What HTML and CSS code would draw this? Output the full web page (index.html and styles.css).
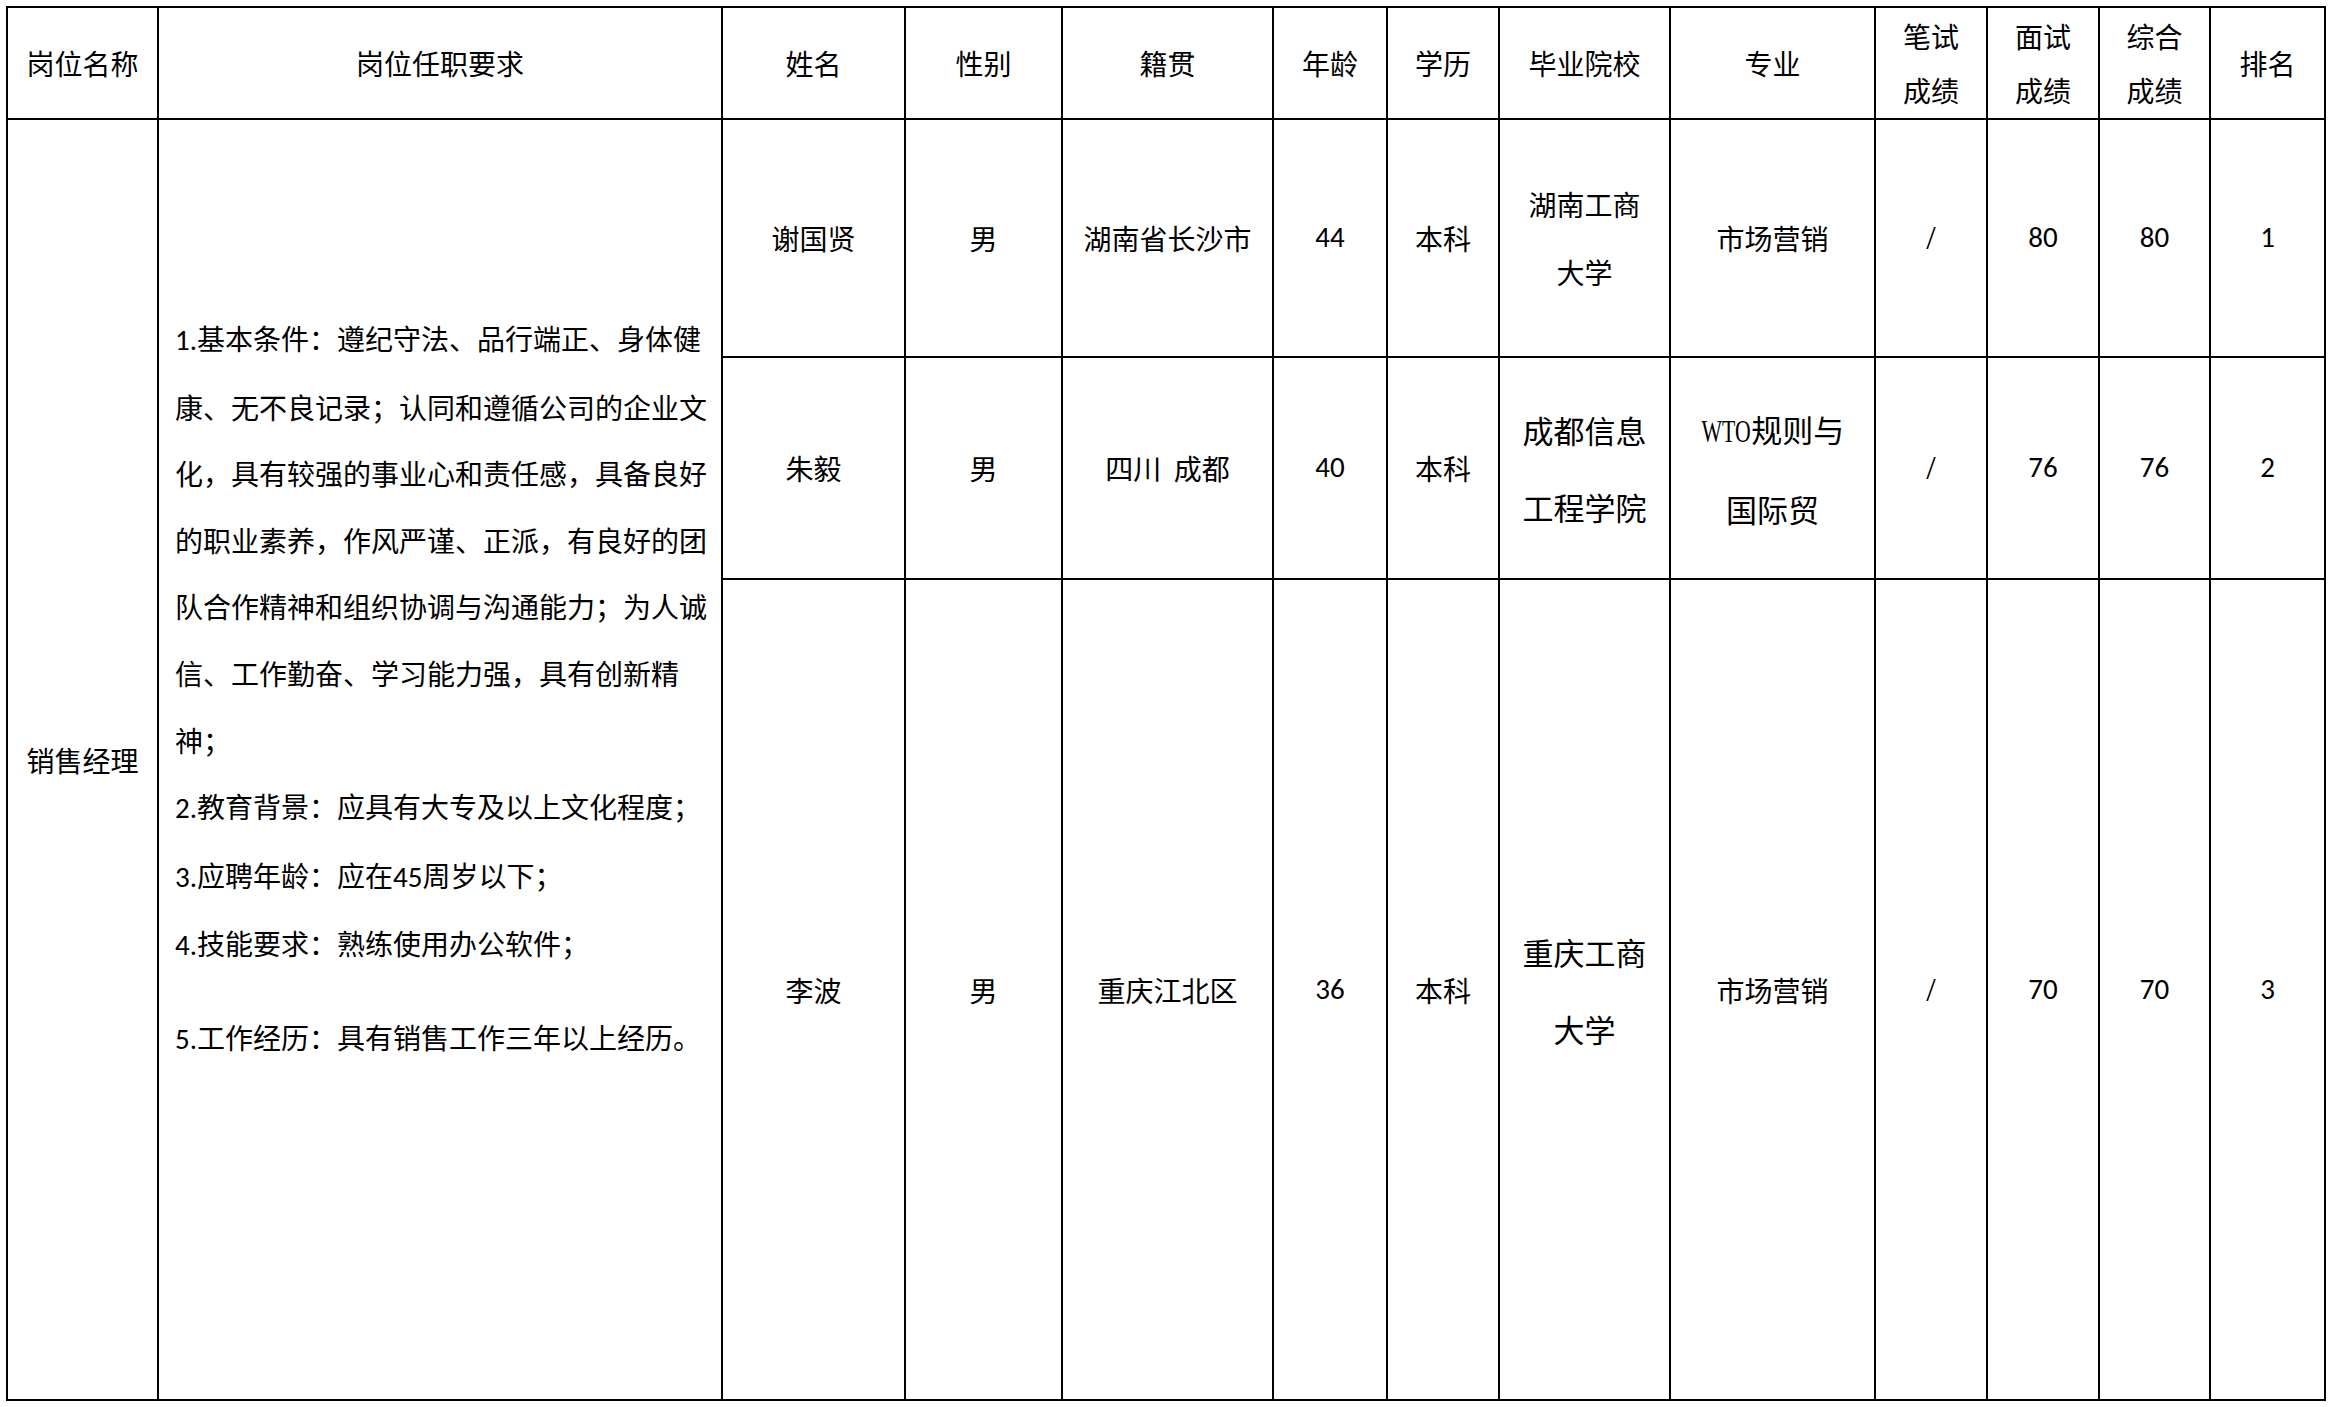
FILE: index.html
```html
<!DOCTYPE html>
<html lang="zh-CN">
<head>
<meta charset="utf-8">
<title>岗位招聘成绩表</title>
<link rel="stylesheet" href="styles.css">
</head>
<body>
<table class="sheet">
  <colgroup>
    <col class="w-post"><col class="w-req"><col class="w-name"><col class="w-sex"><col class="w-origin"><col class="w-age"><col class="w-edu"><col class="w-school"><col class="w-major"><col class="w-score"><col class="w-score2"><col class="w-score3"><col class="w-rank">
  </colgroup>
  <thead>
    <tr class="row-head">
      <th>岗位名称</th>
      <th>岗位任职要求</th>
      <th>姓名</th>
      <th>性别</th>
      <th>籍贯</th>
      <th>年龄</th>
      <th>学历</th>
      <th>毕业院校</th>
      <th>专业</th>
      <th class="two">笔试<br>成绩</th>
      <th class="two">面试<br>成绩</th>
      <th class="two">综合<br>成绩</th>
      <th>排名</th>
    </tr>
  </thead>
  <tbody>
    <tr class="row-1">
      <td rowspan="3" class="post">销售经理</td>
      <td rowspan="3" class="req">
        <p><span class="lat">1.</span>基本条件：遵纪守法、品行端正、身体健</p>
        <p>康、无不良记录；认同和遵循公司的企业文</p>
        <p>化，具有较强的事业心和责任感，具备良好</p>
        <p>的职业素养，作风严谨、正派，有良好的团</p>
        <p>队合作精神和组织协调与沟通能力；为人诚</p>
        <p>信、工作勤奋、学习能力强，具有创新精</p>
        <p>神；</p>
        <p><span class="lat">2.</span>教育背景：应具有大专及以上文化程度；</p>
        <p><span class="lat">3.</span>应聘年龄：应在<span class="lat">45</span>周岁以下；</p>
        <p><span class="lat">4.</span>技能要求：熟练使用办公软件；</p>
        <p class="gap"><span class="lat">5.</span>工作经历：具有销售工作三年以上经历。</p>
      </td>
      <td>谢国贤</td>
      <td>男</td>
      <td>湖南省长沙市</td>
      <td class="num">44</td>
      <td>本科</td>
      <td class="school small">湖南工商<br>大学</td>
      <td>市场营销</td>
      <td class="slash">/</td>
      <td class="num">80</td>
      <td class="num">80</td>
      <td class="num">1</td>
    </tr>
    <tr class="row-2">
      <td>朱毅</td>
      <td>男</td>
      <td class="keep">四川&nbsp;&nbsp;成都</td>
      <td class="num">40</td>
      <td>本科</td>
      <td class="school">成都信息<br>工程学院</td>
      <td class="school"><span class="wto">WTO</span>规则与<br>国际贸</td>
      <td class="slash">/</td>
      <td class="num">76</td>
      <td class="num">76</td>
      <td class="num">2</td>
    </tr>
    <tr class="row-3">
      <td>李波</td>
      <td>男</td>
      <td>重庆江北区</td>
      <td class="num">36</td>
      <td>本科</td>
      <td class="school">重庆工商<br>大学</td>
      <td>市场营销</td>
      <td class="slash">/</td>
      <td class="num">70</td>
      <td class="num">70</td>
      <td class="num">3</td>
    </tr>
  </tbody>
</table>
</body>
</html>
```

FILE: styles.css
```css
html, body {
  margin: 0;
  padding: 0;
  background: #ffffff;
}

body {
  color: #000000;
  font-family: "Noto Sans CJK SC", "Noto Sans", sans-serif;
  font-size: 28px;
}

.sheet {
  margin: 6px 0 0 6px;
  width: 2320px;
  height: 1394px;
  border-collapse: collapse;
  table-layout: fixed;
  border: 2px solid #000;
}

.w-post   { width: 151px; }
.w-req    { width: 564px; }
.w-name   { width: 183px; }
.w-sex    { width: 157px; }
.w-origin { width: 211px; }
.w-age    { width: 114px; }
.w-edu    { width: 112px; }
.w-school { width: 171px; }
.w-major  { width: 205px; }
.w-score  { width: 112px; }
.w-score2 { width: 112px; }
.w-score3 { width: 111px; }
.w-rank   { width: 115px; }

.sheet th,
.sheet td {
  border: 2px solid #000;
  padding: 0;
  text-align: center;
  vertical-align: middle;
  font-weight: 400;
  font-size: 28px;
  line-height: 40px;
  white-space: nowrap;
  overflow: hidden;
}

.row-head { height: 112px; }
.row-1 { height: 238px; }
.row-2 { height: 222px; }
.row-3 { height: 821px; }

.sheet th.two {
  line-height: 54px;
  padding-bottom: 1px;
}

.sheet td.req {
  text-align: left;
  vertical-align: top;
  padding: 185px 0 0 16px;
  line-height: 66.6px;
}

.req p {
  margin: 0;
  white-space: nowrap;
}

.req p.gap {
  margin-top: 25px;
}

.lat {
  font-family: "Carlito", "Lato", "Liberation Sans", sans-serif;
  font-size: 29px;
}

.sheet td.num {
  font-family: "Carlito", "Lato", "Liberation Sans", sans-serif;
  font-size: 29px;
  padding-bottom: 2px;
}

.sheet td.slash {
  font-family: "Liberation Serif", serif;
  font-size: 34px;
}

.sheet td.school {
  font-size: 31px;
  line-height: 77px;
}

.sheet td.school.small {
  font-size: 28px;
  line-height: 68px;
}

.wto {
  display: inline-block;
  font-family: "Liberation Serif", serif;
  font-size: 32px;
  transform: scaleX(0.68);
  margin: 0 -11px;
}

.keep {
  white-space: pre;
}
```
